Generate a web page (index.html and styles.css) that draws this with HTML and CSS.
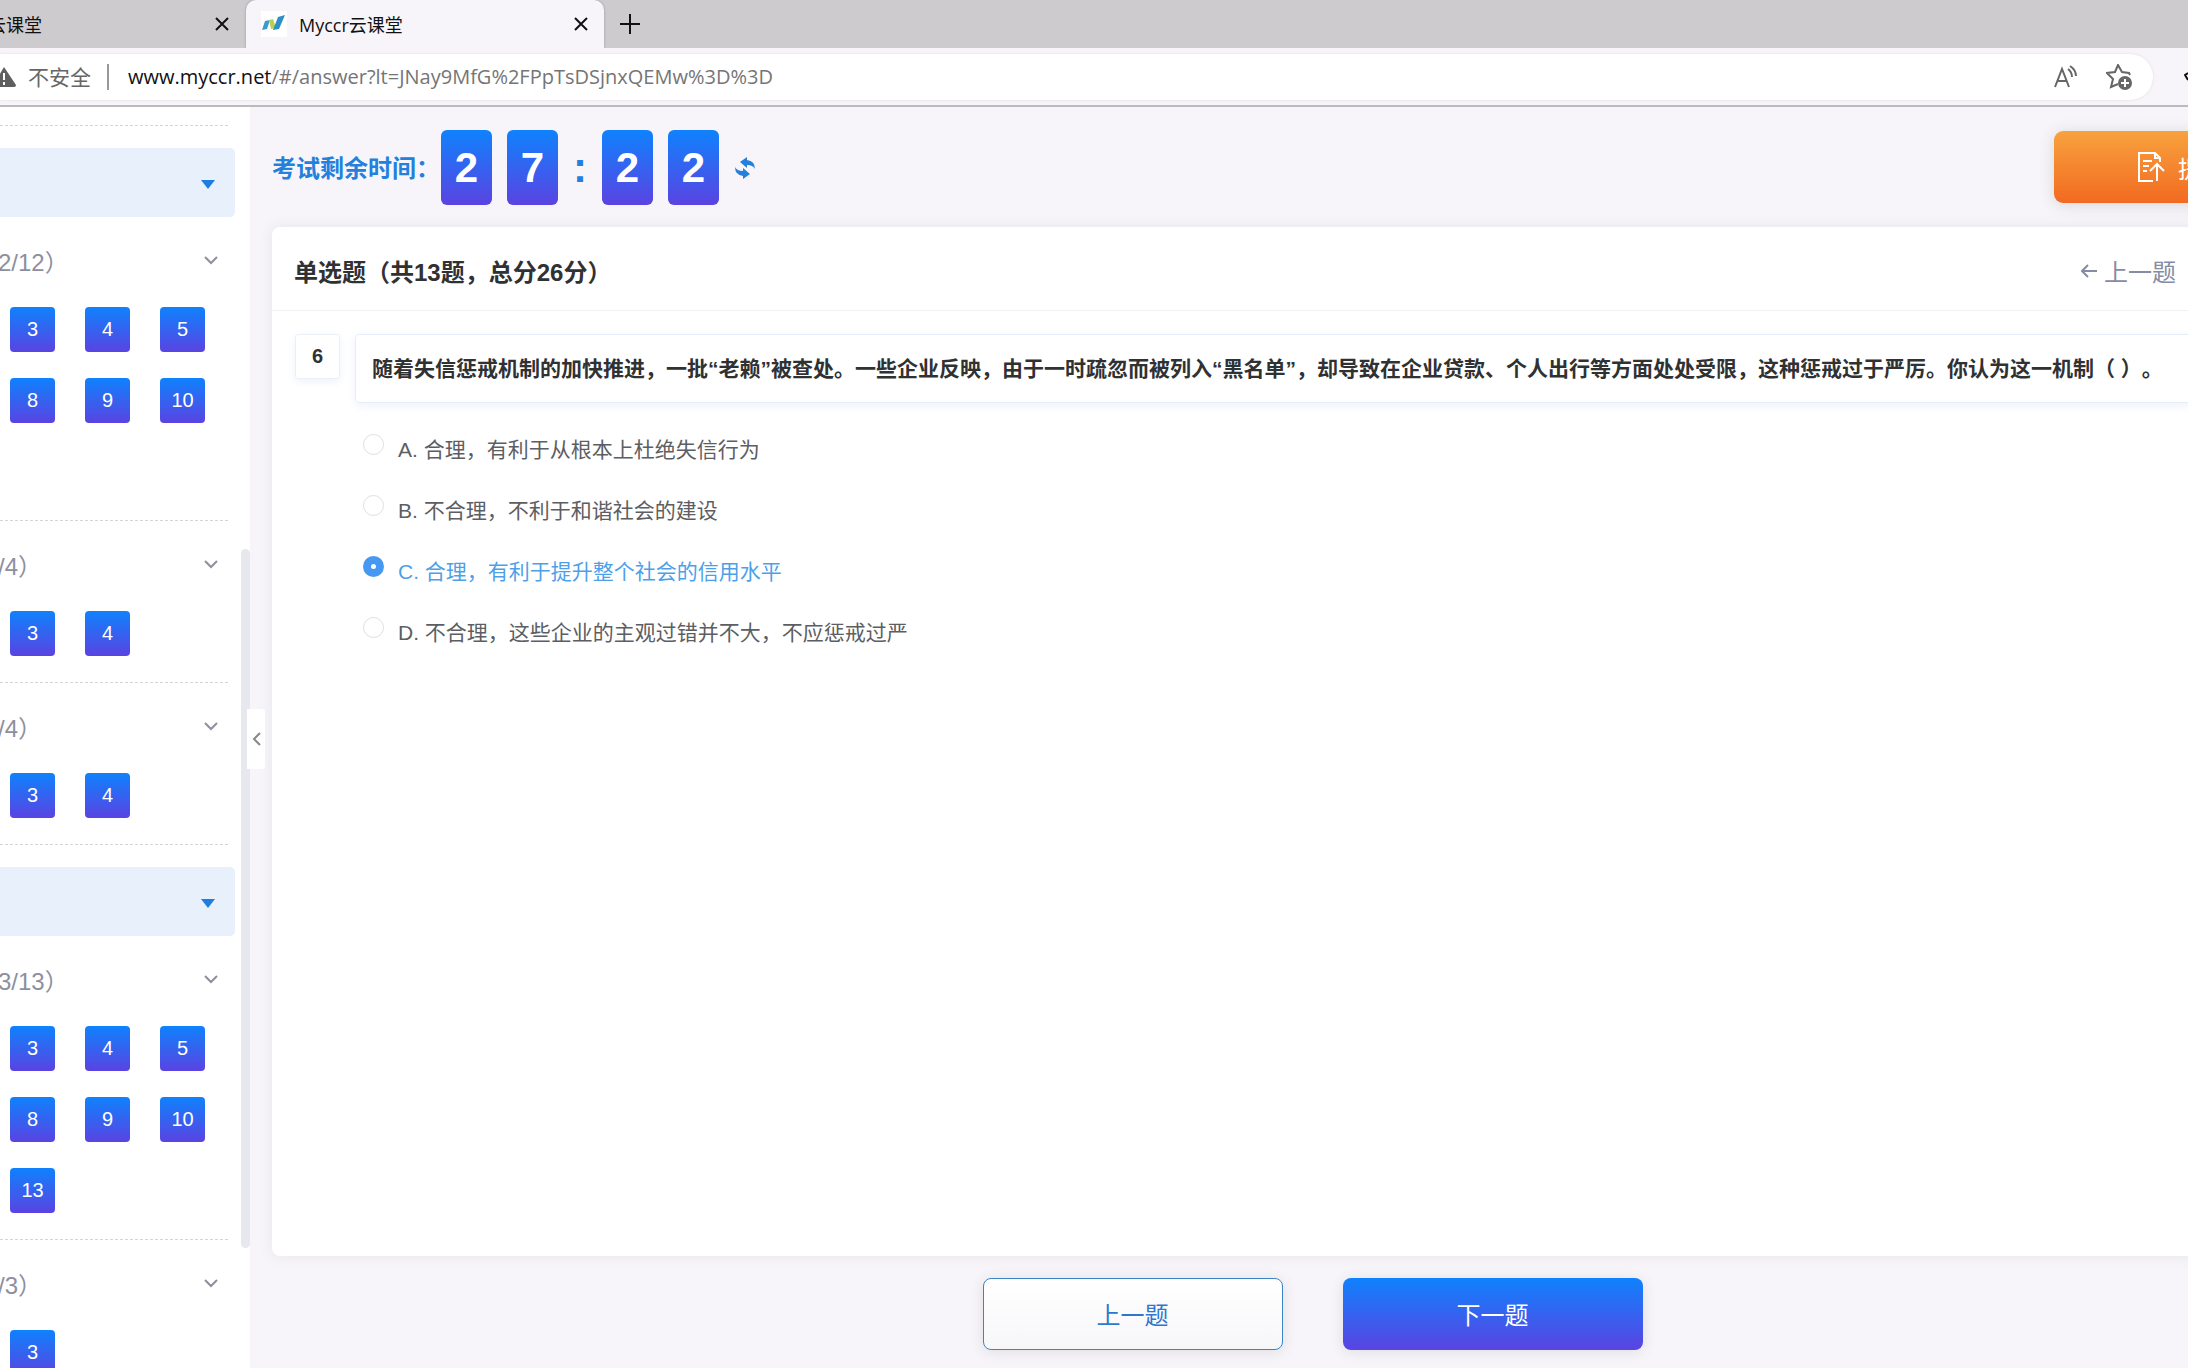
FILE: index.html
```html
<!DOCTYPE html>
<html lang="zh-CN">
<head>
<meta charset="utf-8">
<title>Myccr云课堂</title>
<link rel="stylesheet" href="styles.css">
</head>
<body>
<header class="browser">
  <div class="tabs">
    <div class="tab">
      <span class="tab-title">云课堂</span>
      <button class="icon-btn" aria-label="关闭"><svg width="14" height="14" viewBox="0 0 14 14"><path d="M1 1l12 12M13 1L1 13"/></svg></button>
    </div>
    <div class="tab tab-active">
      <svg class="favicon" width="26" height="26" viewBox="0 0 26 26"><rect width="26" height="26" fill="#fff"/><path d="M4 10l5-1-3 9-5 1z" fill="#3b9bcf"/><path d="M8 9l4-1 3 9-5 1z" fill="#b9cf4e"/><path d="M17 6l7-2-6 14-6 1z" fill="#2e8fc6"/></svg>
      <span class="tab-title">Myccr云课堂</span>
      <button class="icon-btn" aria-label="关闭"><svg width="14" height="14" viewBox="0 0 14 14"><path d="M1 1l12 12M13 1L1 13"/></svg></button>
    </div>
    <button class="icon-btn new-tab" aria-label="新建标签页"><svg width="22" height="22" viewBox="0 0 22 22"><path d="M11 1v20M1 11h20"/></svg></button>
  </div>
  <div class="toolbar">
    <div class="address">
      <svg class="warn" width="16" height="24" viewBox="0 0 16 24"><path d="M4 2L16 20q0 2-2 2H-8z" fill="#5f5f5f"/><path d="M4 8v7M4 17v3" stroke="#fff" stroke-width="2"/></svg>
      <span class="insecure">不安全</span>
      <span class="url"><b>www.myccr.net</b>/#/answer?lt=JNay9MfG%2FPpTsDSjnxQEMw%3D%3D</span>
      <button class="icon-btn addr-icon" aria-label="朗读"><svg width="24" height="24" viewBox="0 0 24 24"><path d="M1 22L8 4l7 18M4 16h8M14 4q4 3 4 8M16 1q6 4 6 10"/></svg></button>
      <button class="icon-btn addr-icon" aria-label="收藏"><svg width="26" height="26" viewBox="0 0 26 26"><path d="M24 11l-1-2-7-1-4-7-3 7-8 1 6 6-2 8 7-3"/><circle cx="19" cy="19" r="7" fill="#666" stroke="none"/><path d="M15 19h8M19 15v8" stroke="#fff"/></svg></button>
    </div>
    <svg class="ext" width="4" height="10" viewBox="0 0 4 10"><path d="M4 1L1 3l3 5"/></svg>
  </div>
</header>
<div class="app">
  <aside class="sidebar">
    <div class="sections">
      <hr class="dash">
      <button class="group" aria-label="展开"></button>
      <section class="block">
        <h3 class="head">2/12）<svg width="14" height="9" viewBox="0 0 14 9"><path d="M1 1l6 6 6-6"/></svg></h3>
        <div class="tiles tiles-three"><button>3</button><button>4</button><button>5</button><button>8</button><button>9</button><button>10</button></div>
      </section>
      <section class="block">
        <h3 class="head">/4）<svg width="14" height="9" viewBox="0 0 14 9"><path d="M1 1l6 6 6-6"/></svg></h3>
        <div class="tiles"><button>3</button><button>4</button></div>
      </section>
      <section class="block">
        <h3 class="head">/4）<svg width="14" height="9" viewBox="0 0 14 9"><path d="M1 1l6 6 6-6"/></svg></h3>
        <div class="tiles"><button>3</button><button>4</button></div>
      </section>
      <button class="group" aria-label="展开"></button>
      <section class="block">
        <h3 class="head">3/13）<svg width="14" height="9" viewBox="0 0 14 9"><path d="M1 1l6 6 6-6"/></svg></h3>
        <div class="tiles tiles-three"><button>3</button><button>4</button><button>5</button><button>8</button><button>9</button><button>10</button><button>13</button></div>
      </section>
      <section class="block">
        <h3 class="head">/3）<svg width="14" height="9" viewBox="0 0 14 9"><path d="M1 1l6 6 6-6"/></svg></h3>
        <div class="tiles"><button>3</button></div>
      </section>
    </div>
    <div class="thumb"></div>
    <button class="collapse" aria-label="收起"><svg width="9" height="14" viewBox="0 0 9 14"><path d="M8 1L2 7l6 6"/></svg></button>
  </aside>
  <main class="main">
    <div class="top">
      <div class="timer">
        <span class="timer-label">考试剩余时间：</span>
        <span class="digit">2</span><span class="digit">7</span><span class="colon">:</span><span class="digit">2</span><span class="digit">2</span>
        <button class="icon-btn refresh" aria-label="刷新"><svg width="22" height="24" viewBox="0 0 22 24"><path d="M6 6l7-5v3q8 1 8 9-2-4-8-4v3zM16 18l-7 5v-3q-8-1-8-9 2 4 8 4v-3z"/></svg></button>
      </div>
      <button class="submit"><svg width="28" height="32" viewBox="0 0 28 32"><path d="M16 30H2V2h16l5 5v4M18 2v5h5M6 10h9M6 15h6M6 20h4M20 30V13M13 20l7-7 7 7"/></svg>提</button>
    </div>
    <section class="card">
      <div class="card-head">
        <h2>单选题（共13题，总分26分）</h2>
        <a class="prev-link" href="#prev"><svg width="16" height="14" viewBox="0 0 16 14"><path d="M16 7H1M7 1L1 7l6 6"/></svg>上一题</a>
      </div>
      <div class="question">
        <span class="number">6</span>
        <div class="body">
          <p class="stem">随着失信惩戒机制的加快推进，一批“老赖”被查处。一些企业反映，由于一时疏忽而被列入“黑名单”，却导致在企业贷款、个人出行等方面处处受限，这种惩戒过于严厉。你认为这一机制（ ）。</p>
          <div class="options">
            <label class="option"><input type="radio" name="q6">A. 合理，有利于从根本上杜绝失信行为</label>
            <label class="option"><input type="radio" name="q6">B. 不合理，不利于和谐社会的建设</label>
            <label class="option"><input type="radio" name="q6" checked>C. 合理，有利于提升整个社会的信用水平</label>
            <label class="option"><input type="radio" name="q6">D. 不合理，这些企业的主观过错并不大，不应惩戒过严</label>
          </div>
        </div>
      </div>
    </section>
    <div class="pager">
      <button class="pager-btn">上一题</button>
      <button class="pager-btn pager-next">下一题</button>
    </div>
  </main>
</div>
</body>
</html>
```
FILE: styles.css
```css
* { box-sizing: border-box; }
body {
  margin: 0;
  height: 100vh;
  display: flex;
  flex-direction: column;
  overflow: hidden;
  font-family: "Liberation Sans", "Noto Sans CJK SC", sans-serif;
  background: #f7f5f9;
}
button { font: inherit; border: 0; padding: 0; cursor: pointer; }
svg { fill: none; stroke: currentColor; stroke-width: 2; flex: none; display: block; }

/* browser frame */
.browser { font-family: "Open Sans", "Noto Sans CJK SC", sans-serif; flex: none; }
.tabs { display: flex; height: 48px; background: #cdcbce; color: #111; }
.tab { display: flex; align-items: center; width: 246px; padding-right: 17px; font-size: 18px; }
.tab-active { width: 358px; padding: 0 16px 0 15px; background: #f7f5f9; border-radius: 10px 10px 0 0; box-shadow: 0 0 3px #999; clip-path: inset(0 -4px 0 -4px); }
.tab .tab-title { flex: 1; white-space: nowrap; overflow: hidden; }
.tab:first-child .tab-title { margin-left: -12px; }
.favicon { margin-right: 12px; stroke: none; }
.icon-btn { background: none; color: inherit; }
.new-tab { margin-left: 15px; }
.toolbar { display: flex; align-items: center; justify-content: space-between; height: 59px; background: #f7f5f9; border-bottom: 2px solid #bcbabd; }
.address { display: flex; align-items: center; flex: 1; height: 46px; margin-right: 31px; padding-right: 21px; background: #fff; border-radius: 0 23px 23px 0; box-shadow: 0 0 3px #ddd; font-size: 20px; color: #757575; }
.warn { stroke: none; margin-right: 12px; }
.insecure { font-size: 21px; color: #666; padding-right: 16px; border-right: 2px solid #999; line-height: 26px; }
.url { flex: 1; margin-left: 19px; white-space: nowrap; }
.url b { font-weight: 400; color: #111; }
.addr-icon { margin-left: 28px; color: #666; }
.ext { color: #111; }

/* sidebar */
.app { display: flex; flex: 1; min-height: 0; }
.sidebar { position: relative; flex: none; width: 250px; background: #fff; z-index: 1; }
.sections { height: 100%; padding-top: 18px; overflow: hidden; }
.dash { margin: 0 22px 0 0; border: 0; border-top: 1px dashed #d3d5db; }
.group { display: flex; align-items: center; justify-content: flex-end; width: 235px; height: 69px; margin-top: 22px; padding: 3px 20px 0 0; background: #e8f0fc; border-radius: 0 5px 5px 0; }
.group::after { content: ""; border: 7px solid transparent; border-top: 9px solid #1d7de0; border-bottom: 0; }
.block { margin-right: 22px; padding-bottom: 26px; border-bottom: 1px dashed #d3d5db; }
.head { display: flex; align-items: center; justify-content: space-between; height: 90px; margin: 0; padding: 0 10px 3px 0; font-size: 24px; font-weight: 400; color: #8d8f9f; text-indent: -2px; }
.tiles { display: grid; grid-template-columns: repeat(3, 45px); grid-auto-rows: 45px; gap: 26px 30px; padding-left: 10px; }
.tiles-three { grid-template-rows: repeat(3, 45px); }
.tiles button { border-radius: 4px; font-size: 20px; color: #fff; background: linear-gradient(#0f82fd, #5a43e2); }
.thumb { position: absolute; right: 0; top: 442px; width: 9px; height: 699px; border-radius: 5px; background: #e7e7ee; }
.collapse { position: absolute; left: 247px; top: 602px; width: 18px; height: 60px; display: grid; place-items: center; background: #fff; border-radius: 0 3px 3px 0; color: #888; }

/* main area, wider than the window */
.main { flex: 1; display: flex; flex-direction: column; margin-right: -165px; padding: 23px 0 18px 22px; min-width: 0; }
.top { display: flex; justify-content: space-between; height: 75px; }
.timer { display: flex; align-items: center; color: #2380dd; font-weight: 700; }
.timer-label { width: 169px; padding-bottom: 2px; font-size: 24px; }
.digit { width: 51px; height: 75px; margin-right: 15px; border-radius: 6px; font-size: 42px; line-height: 75px; text-align: center; color: #fff; background: linear-gradient(#0f82fd, #5a43e2); }
.colon { width: 29px; font-size: 42px; }
.refresh svg { fill: currentColor; stroke: none; }
.submit { display: flex; align-items: center; gap: 13px; width: 299px; height: 72px; margin-top: 1px; padding-left: 83px; border-radius: 9px; font-size: 24px; color: #fff; background: linear-gradient(#f8a23e, #f26a21); box-shadow: 0 2px 16px #d8d6dc; }
.card { flex: 1; margin-top: 22px; background: #fff; border-radius: 8px; box-shadow: 0 0 14px #e6e5e9; }
.card-head { display: flex; align-items: center; justify-content: space-between; height: 84px; padding: 4px 177px 0 22px; border-bottom: 1px solid #f1f1f5; }
.card-head h2 { margin: 0; font-size: 24px; color: #303133; }
.prev-link { display: flex; align-items: center; gap: 7px; font-size: 24px; color: #858ca3; text-decoration: none; }
.question { display: flex; gap: 15px; padding: 23px 0 0 23px; }
.number { width: 45px; height: 45px; border: 1px solid #ebeff8; border-radius: 3px; font-size: 20px; font-weight: 700; line-height: 43px; text-align: center; color: #303133; box-shadow: 0 3px 8px #eef2fb; }
.body { flex: 1; }
.stem { margin: 0; height: 69px; padding-left: 16px; border: 1px solid #e6edf8; border-radius: 4px; font-size: 21px; font-weight: 700; line-height: 67px; white-space: nowrap; text-spacing-trim: space-all; color: #303133; box-shadow: 0 3px 10px #eef2fb; }
.options { display: grid; grid-auto-rows: 61px; padding: 14px 0 0 8px; }
.option { display: flex; align-items: center; gap: 14px; font-size: 21px; color: #5c5e63; }
.option input { appearance: none; width: 21px; height: 21px; margin: 0 0 6px; border: 1px solid #dcdfe6; border-radius: 50%; background: #fff; }
.option input:checked { border: 8px solid #4599f2; }
.option:has(input:checked) { color: #4e9fe9; }
.pager { display: flex; justify-content: center; gap: 60px; padding-top: 22px; }
.pager-btn { width: 300px; height: 72px; padding-bottom: 2px; border: 1px solid #3c84c4; border-radius: 8px; font-size: 24px; color: #2e78cc; background: linear-gradient(#fff, #f7f7fa); box-shadow: 0 2px 14px #dedde3; }
.pager-next { border: 0; color: #fff; background: linear-gradient(#0f82fd, #5a43e2); }
```
